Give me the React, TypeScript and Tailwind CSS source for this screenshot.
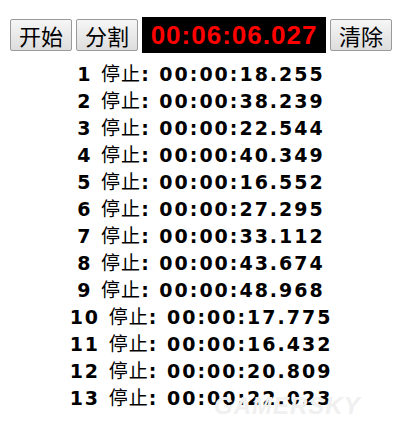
const laps = [
  '00:00:18.255',
  '00:00:38.239',
  '00:00:22.544',
  '00:00:40.349',
  '00:00:16.552',
  '00:00:27.295',
  '00:00:33.112',
  '00:00:43.674',
  '00:00:48.968',
  '00:00:17.775',
  '00:00:16.432',
  '00:00:20.809',
  '00:00:22.023',
];

function Btn({ label }: { label: string }) {
  return (
    <button
      type="button"
      className="h-[32px] w-[62px] rounded-[2px] border border-[#9a9a9a] bg-gradient-to-b from-[#f6f6f6] to-[#dddddd] text-[22px] leading-none text-black [font-family:'Noto_Sans_CJK_SC',sans-serif]"
    >
      {label}
    </button>
  );
}

export default function App() {
  return (
    <div className="relative h-[427px] w-[402px] overflow-hidden bg-white">
      <div className="flex items-center justify-center gap-[4px] pt-[17px]">
        <Btn label="开始" />
        <Btn label="分割" />
        <div className="flex h-[36px] w-[184px] items-center justify-center bg-black text-[26px] font-bold tracking-[1px] text-[#ff0000] [font-family:'Liberation_Sans',sans-serif]">
          00:06:06.027
        </div>
        <Btn label="清除" />
      </div>
      <div className="mt-[6px] flex flex-col items-center text-[19px] font-bold tracking-[2px] text-black [font-family:'DejaVu_Sans','Noto_Sans_CJK_SC',sans-serif]">
        {laps.map((t, i) => (
          <div key={i} className="h-[27px] whitespace-pre leading-[27px]">
            {i + 1}{' '}
            <span className="font-normal leading-[27px] tracking-[1px] [font-family:'Noto_Sans_CJK_SC',sans-serif]">
              停止
            </span>
            : {t}
          </div>
        ))}
      </div>
      <div className="absolute left-[214px] top-[388px] text-[24px] font-bold italic tracking-[1px] text-[#f0f0f0] [font-family:'Liberation_Sans',sans-serif]">
        GAMERSKY
      </div>
    </div>
  );
}
